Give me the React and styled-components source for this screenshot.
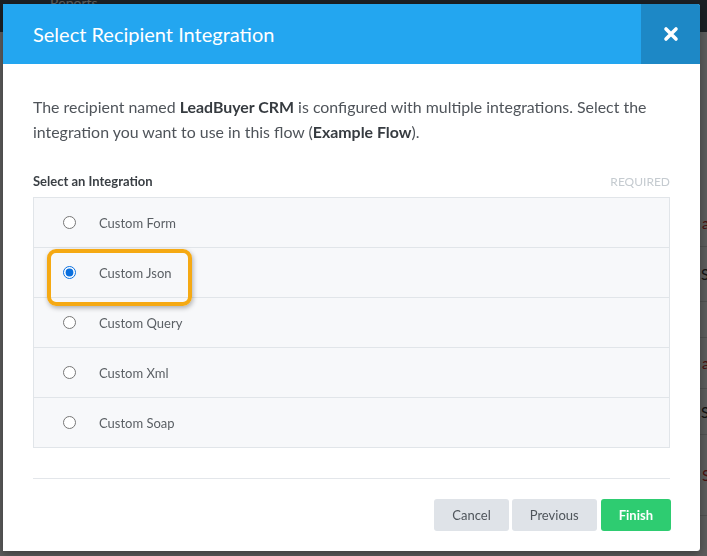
import React, { useState } from 'react'
import styled, { createGlobalStyle } from 'styled-components'

const integrations = [
    'Custom Form',
    'Custom Json',
    'Custom Query',
    'Custom Xml',
    'Custom Soap',
]

// rows of the page that peek out to the right of the modal
const pageRows = [
    { text: 'assigned', red: true, height: 46 },
    { text: 'Status', red: false, height: 54 },
    { text: '', red: false, height: 35 },
    { text: 'assigned', red: true, height: 50 },
    { text: 'Status', red: false, height: 45 },
    { text: 'Sold', red: true, height: 80 },
]

const App = () => {
    const [selected, setSelected] = useState('Custom Json')

    return (
        <>
            <GlobalStyle />
            <Page>
                <NavBar>
                    <NavLink>Reports</NavLink>
                </NavBar>
                <PageBody>
                    {pageRows.map((row, i) => (
                        <PageRow key={i} $red={row.red} $height={row.height}>
                            {row.text}
                        </PageRow>
                    ))}
                </PageBody>
            </Page>

            <Backdrop>
                <Modal>
                    <Header>
                        <Title>Select Recipient Integration</Title>
                        <CloseButton aria-label="Close">
                            <svg width="16" height="16" viewBox="0 0 16 16">
                                <path
                                    d="M3 3 L13 13 M13 3 L3 13"
                                    stroke="#fff"
                                    strokeWidth="3.6"
                                    strokeLinecap="round"
                                />
                            </svg>
                        </CloseButton>
                    </Header>

                    <Body>
                        <Intro>
                            The recipient named <b>LeadBuyer CRM</b> is
                            configured with multiple integrations. Select the
                            integration you want to use in this flow (
                            <b>Example Flow</b>).
                        </Intro>

                        <FieldHeader>
                            <FieldLabel>Select an Integration</FieldLabel>
                            <Required>REQUIRED</Required>
                        </FieldHeader>

                        <OptionList>
                            {integrations.map((name) => (
                                <Option key={name}>
                                    <OptionLabel
                                        $highlight={name === 'Custom Json'}
                                    >
                                        <Radio
                                            type="radio"
                                            name="integration"
                                            checked={selected === name}
                                            onChange={() => setSelected(name)}
                                        />
                                        <OptionText>{name}</OptionText>
                                    </OptionLabel>
                                </Option>
                            ))}
                        </OptionList>
                    </Body>

                    <Footer>
                        <Button>Cancel</Button>
                        <Button>Previous</Button>
                        <Button $primary>Finish</Button>
                    </Footer>
                </Modal>
            </Backdrop>
        </>
    )
}

export default App

const GlobalStyle = createGlobalStyle`
    html, body {
        margin: 0;
        padding: 0;
        height: 100%;
        overflow: hidden;
    }
    body {
        font-family: Lato, "Open Sans", sans-serif;
    }
`

const Page = styled.div`
    height: 100vh;
    background: #fff;
    overflow: hidden;
`

const NavBar = styled.div`
    height: 32px;
    background: #4b5864;
    display: flex;
    align-items: flex-start;
    padding-left: 50px;
`

const NavLink = styled.span`
    color: #fff;
    font-size: 14px;
    margin-top: -6px;
`

const PageBody = styled.div`
    padding: 168px 0 0 700px;
    display: flex;
    flex-direction: column;
`

const PageRow = styled.div`
    height: ${({ $height }) => $height}px;
    flex-shrink: 0;
    display: flex;
    align-items: center;
    border-bottom: 1px solid #ddd;
    font-size: 15px;
    white-space: nowrap;
    color: ${({ $red }) => ($red ? '#c9302c' : '#333')};
    padding-left: ${({ $red }) => ($red ? '2px' : '1px')};
`

const Backdrop = styled.div`
    position: fixed;
    inset: 0;
    background: rgba(0, 0, 0, 0.64);
    padding: 4px 7px 5px 3px;
    display: flex;
`

const Modal = styled.div`
    flex: 1;
    background: #fff;
    display: flex;
    flex-direction: column;
    border-radius: 0 3px 3px 0;
    box-shadow: 0 3px 10px rgba(0, 0, 0, 0.35);
    overflow: hidden;
`

const Header = styled.div`
    height: 60px;
    background: #23a6f0;
    display: flex;
    align-items: stretch;
`

const Title = styled.h2`
    flex: 1;
    margin: 0;
    padding-left: 30px;
    padding-bottom: 1px;
    display: flex;
    align-items: center;
    color: #fff;
    font-size: 20px;
    font-weight: 400;
`

const CloseButton = styled.button`
    width: 59px;
    border: none;
    background: #1d88c6;
    display: flex;
    align-items: center;
    justify-content: center;
    padding: 0;
    cursor: pointer;
`

const Body = styled.div`
    margin: 0 30px;
    padding: 30px 0;
    border-bottom: 1px solid #e3e6ea;
`

const Intro = styled.p`
    margin: 0 0 29px 0;
    font-size: 15.9px;
    line-height: 25px;
    color: #4f545a;

    b {
        color: #363b40;
        font-weight: 700;
    }
`

const FieldHeader = styled.div`
    display: flex;
    justify-content: space-between;
    align-items: center;
    margin-bottom: 8px;
`

const FieldLabel = styled.span`
    font-size: 13px;
    font-weight: 700;
    color: #3a3f44;
`

const Required = styled.span`
    font-size: 12px;
    color: #c5cbd0;
`

const OptionList = styled.div`
    border: 1px solid #e1e5e9;
    background: #f7f8fa;
`

const Option = styled.div`
    height: 49px;
    display: flex;
    align-items: center;
    padding-left: 15px;

    & + & {
        border-top: 1px solid #e1e5e9;
    }
`

const OptionLabel = styled.label`
    display: flex;
    align-items: center;
    gap: 23px;
    padding: 12px 16px 21px 12px;
    margin: 9px 0 0 -2px;
    border-radius: 9px;
    border: 4px solid
        ${({ $highlight }) => ($highlight ? '#f5a913' : 'transparent')};
    box-shadow: ${({ $highlight }) =>
        $highlight ? '1px 2px 5px rgba(0, 0, 0, 0.3)' : 'none'};
`

const Radio = styled.input`
    margin: 0;
    width: 13px;
    height: 13px;
    accent-color: #0a6fde;
`

const OptionText = styled.span`
    font-size: 13px;
    color: #5a5f64;
`

const Footer = styled.div`
    margin-top: auto;
    display: flex;
    justify-content: flex-end;
    gap: 3px;
    padding: 0 29px 20px 30px;
`

const Button = styled.button`
    height: 32px;
    padding: 0 18px;
    border: none;
    border-radius: 3px;
    font-family: inherit;
    font-size: 13px;
    font-weight: ${({ $primary }) => ($primary ? 700 : 400)};
    color: ${({ $primary }) => ($primary ? '#fff' : '#4f555b')};
    background: ${({ $primary }) => ($primary ? '#2ecc71' : '#dfe3e8')};
    margin-left: ${({ $primary }) => ($primary ? '1px' : '0')};
    cursor: pointer;
`
